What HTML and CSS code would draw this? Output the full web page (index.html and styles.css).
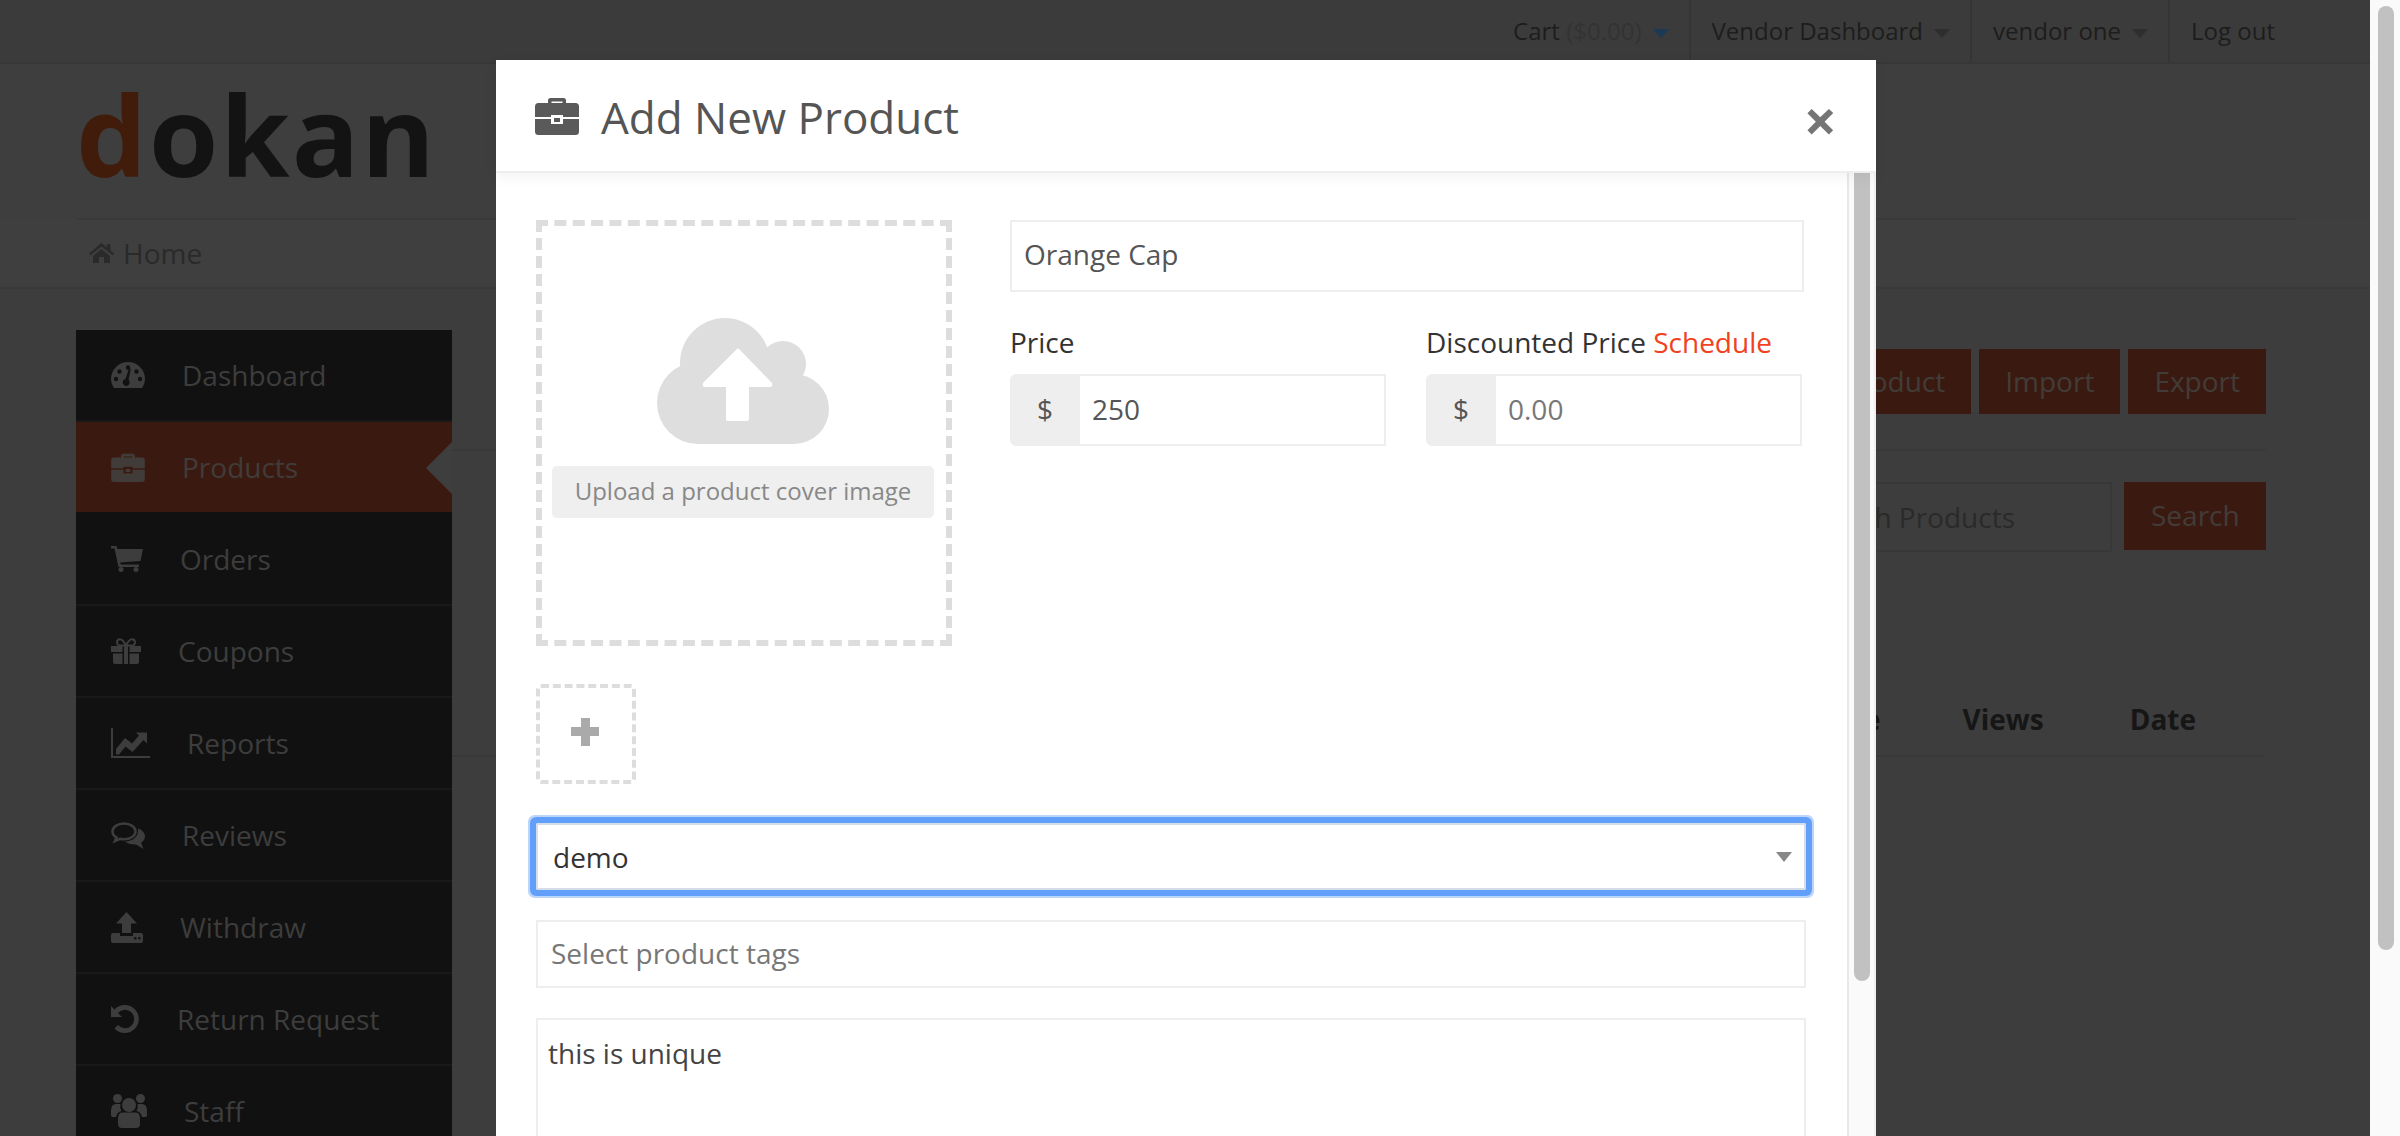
FILE: index.html
```html
<!DOCTYPE html>
<html lang="en">
<head>
  <meta charset="UTF-8" />
  <title>Add New Product</title>
  <link rel="stylesheet" href="styles.css">
</head>
<body>
  <svg class="defs" width="0" height="0">
    <symbol id="briefcase" viewBox="0 0 44 38">
      <path d="M13 7V3.500Q13 1 15.500 1H28.500Q31 1 31 3.500V7H27.500V4.500H16.500V7Z"/>
      <path d="M3.500 6H40.500Q44 6 44 9.500V20H28V18H16V20H0V9.500Q0 6 3.500 6Z"/>
      <path d="M0 22H16V27H28V22H44V34.500Q44 38 40.500 38H3.500Q0 38 0 34.500Z"/>
      <rect x="19" y="21" width="6" height="4"/>
    </symbol>
  </svg>

  <div class="page">
    <div class="site">
      <div class="topbar">
        <a class="top-item">Cart <span class="top-muted">($0.00)</span><i class="caret caret-blue"></i></a>
        <a class="top-item">Vendor Dashboard<i class="caret"></i></a>
        <a class="top-item">vendor one<i class="caret"></i></a>
        <a class="top-item">Log out</a>
      </div>

      <div class="brand"><span class="logo"><span class="logo-d">d</span>okan</span></div>

      <div class="nav">
        <div class="nav-inner">
          <svg class="home-icon" viewBox="0 0 25 20"><path d="M12.500 0L18 4.600V1.200H21.500V7.500L25 10.500L23.500 12.300L12.500 3.500L1.500 12.300L0 10.500Z"/><path d="M4 13L12.500 6L21 13V20H15V14H10V20H4Z"/></svg>
          Home
        </div>
      </div>

      <div class="main">
        <ul class="sidebar">
          <li class="side-row">
            <svg class="ic" width="34" height="26" viewBox="0 0 34 26"><path fill-rule="evenodd" d="M3 26C1 23 0 20 0 17A17 17 0 0 1 34 17C34 20 33 23 31 26ZM2.800 17a2.200 2.200 0 1 0 4.400 0a2.200 2.200 0 1 0 -4.400 0ZM6.300 9.500a2.200 2.200 0 1 0 4.400 0a2.200 2.200 0 1 0 -4.400 0ZM14.800 5.500a2.200 2.200 0 1 0 4.400 0a2.200 2.200 0 1 0 -4.400 0ZM23.300 9.500a2.200 2.200 0 1 0 4.400 0a2.200 2.200 0 1 0 -4.400 0ZM26.800 17a2.200 2.200 0 1 0 4.400 0a2.200 2.200 0 1 0 -4.400 0Z"/><path class="cut" d="M14.500 17L18 6.500L19.800 7L17.500 17.800A3.500 3.500 0 1 1 14.500 17Z"/></svg>
            <span>Dashboard</span>
          </li>
          <li class="side-row side-active">
            <svg class="ic" width="34" height="29"><use href="#briefcase"/></svg>
            <span>Products</span>
          </li>
          <li class="side-row">
            <svg class="ic" width="32" height="26" viewBox="0 0 32 26"><path d="M0 0H5.500L6.300 3H32L29.500 15L9.200 16.500L9.700 18.500H28V21H7.500L3.500 2.500H0Z"/><circle cx="10" cy="23.500" r="2.500"/><circle cx="25" cy="23.500" r="2.500"/></svg>
            <span>Orders</span>
          </li>
          <li class="side-row">
            <svg class="ic" width="30" height="26" viewBox="0 0 30 26"><path d="M0 8H11.500V14H0ZM13 8H17V26H13ZM18.500 8H30V14H18.500ZM2 15.500H11.500V26H4Q2 26 2 24ZM18.500 15.500H28V24Q28 26 26 26H18.500Z"/><path class="bow" d="M15 7.500H10Q6 7.500 6 4.500Q6 1.200 9 1.200Q12 1.200 15 7.500Q18 1.200 21 1.200Q24 1.200 24 4.500Q24 7.500 20 7.500Z"/></svg>
            <span>Coupons</span>
          </li>
          <li class="side-row">
            <svg class="ic" width="39" height="30" viewBox="0 0 39 30"><path class="bow" d="M1 0V29H39"/><path d="M5 21L14 10L21 15.500L28 7.500L25 4.500H36V15.500L32.500 12L21.500 24L14.500 18.500L8 26.500H5Z"/></svg>
            <span>Reports</span>
          </li>
          <li class="side-row">
            <svg class="ic" width="34" height="27" viewBox="0 0 34 27"><path class="bow bow-thick" d="M13 1.500C6.500 1.500 1.500 5 1.500 9.500C1.500 12 3 14 5.500 15.500L4 19L9 16.800C10.500 17.200 11.800 17.300 13 17.300C19.500 17.300 24.500 13.800 24.500 9.500C24.500 5 19.500 1.500 13 1.500Z"/><path d="M27 6.500C31 8 34 10.800 34 14.500C34 17 32.500 19.300 30 20.800L32.500 27L25 22.500C21 22.800 16.500 21.800 14 19.300C20.500 19.500 28 16 27 6.500Z"/></svg>
            <span>Reviews</span>
          </li>
          <li class="side-row">
            <svg class="ic" width="32" height="31" viewBox="0 0 32 31"><path d="M15.500 0L26 11.500H20V21H11V11.500H5Z"/><path fill-rule="evenodd" d="M2 21H9V24H22V21H30Q32 21 32 23V29Q32 31 30 31H2Q0 31 0 29V23Q0 21 2 21ZM23 26.200a1.300 1.300 0 1 0 2.600 0a1.300 1.300 0 1 0 -2.600 0ZM27 26.200a1.300 1.300 0 1 0 2.600 0a1.300 1.300 0 1 0 -2.600 0Z"/></svg>
            <span>Withdraw</span>
          </li>
          <li class="side-row">
            <svg class="ic" width="29" height="28" viewBox="0 0 29 28"><path d="M0 1L3.500 4.500A14 14 0 1 1 3.500 23.500L7 20A9.200 9.200 0 1 0 7 8L11 12H0Z"/></svg>
            <span>Return Request</span>
          </li>
          <li class="side-row">
            <svg class="ic" width="36" height="34" viewBox="0 0 36 34"><circle cx="6.500" cy="4.500" r="4.500"/><circle cx="29.500" cy="4.500" r="4.500"/><circle cx="18" cy="11" r="7"/><path d="M0 17Q0 10 5 10H9.500Q8.500 14 10.500 17Q6 18 5 23H1.500Q0 23 0 21ZM36 17Q36 10 31 10H26.500Q27.500 14 25.500 17Q30 18 31 23H34.500Q36 23 36 21ZM11 18.500H25Q29 18.500 29 25V30Q29 34 25 34H11Q7 34 7 30V25Q7 18.500 11 18.500Z"/></svg>
            <span>Staff</span>
          </li>
        </ul>

        <div class="content">
          <div class="actions">
            <a class="btn">Add New Product</a>
            <a class="btn">Import</a>
            <a class="btn">Export</a>
          </div>
          <div class="search-row">
            <div class="search-box">Search Products</div>
            <a class="btn btn-search">Search</a>
          </div>
          <div class="table-head">
            <span>Type</span>
            <span>Views</span>
            <span>Date</span>
          </div>
        </div>
      </div>

      <div class="modal">
        <div class="modal-head">
          <svg class="modal-icon" width="44" height="38"><use href="#briefcase"/></svg>
          <h1 class="modal-title">Add New Product</h1>
          <span class="modal-close">&times;</span>
        </div>
        <div class="modal-body">
          <div class="form">
            <div class="top-row">
              <div class="cover">
                <svg class="cloud" width="172" height="126" viewBox="0 0 172 126">
                  <circle cx="68" cy="45" r="45"/>
                  <circle cx="126" cy="46" r="23"/>
                  <circle cx="41" cy="85" r="41"/>
                  <circle cx="137" cy="91" r="35"/>
                  <rect x="41" y="50" width="96" height="76"/>
                  <path class="cloud-arrow" d="M80 31Q81 30 82 31L115 65Q116 69 113 69H92V101Q92 103 90 103H71Q69 103 69 101V69H48Q45 69 46 65Z"/>
                </svg>
                <div class="cover-label">Upload a product cover image</div>
              </div>
              <div class="fields">
                <div class="input title-input">Orange Cap</div>
                <div class="price-row">
                  <div class="price-col">
                    <div class="label">Price</div>
                    <div class="group">
                      <span class="addon">$</span>
                      <span class="group-value">250</span>
                    </div>
                  </div>
                  <div class="price-col">
                    <div class="label">Discounted Price <a class="link">Schedule</a></div>
                    <div class="group">
                      <span class="addon">$</span>
                      <span class="group-value placeholder">0.00</span>
                    </div>
                  </div>
                </div>
              </div>
            </div>

            <div class="add-image"><span class="plus"></span></div>

            <div class="select">demo<i class="select-caret"></i></div>
            <div class="input tags placeholder">Select product tags</div>
            <div class="textarea">this is unique</div>
          </div>
          <div class="modal-track"><div class="modal-thumb"></div></div>
        </div>
      </div>
    </div>

    <div class="page-track"><div class="page-thumb"></div></div>
  </div>
</body>
</html>
```

FILE: styles.css
```css
* {
  box-sizing: border-box;
}

html, body {
  height: 100%;
  margin: 0;
  overflow: hidden;
}

body {
  font-family: "Open Sans", "Noto Sans", sans-serif;
  font-size: 28px;
  color: #555;
}

.defs {
  position: absolute;
}

.page {
  display: flex;
  height: 1136px;
}

.site {
  position: relative;
  flex: 1;
  overflow: hidden;
  background: #3d3d3d;
}

/* top bar */
.topbar {
  display: flex;
  justify-content: flex-end;
  height: 64px;
  padding-right: 74px;
  background: #3b3b3b;
  border-bottom: 2px solid #373737;
  font-size: 24px;
  line-height: 61px;
  color: #1d1d1d;
}

.top-item {
  padding: 0 20px 0 21px;
  border-right: 2px solid #353535;
}

.top-item:last-child {
  padding-right: 21px;
  border-right: 0;
}

.top-muted {
  color: #333;
}

.caret {
  display: inline-block;
  margin-left: 11px;
  vertical-align: middle;
  border-top: 9px solid #2e2e2e;
  border-left: 8px solid transparent;
  border-right: 8px solid transparent;
}

.caret-blue {
  border-top-color: #1a3a55;
}

/* logo + nav */
.brand {
  height: 154px;
  padding: 0 0 0 76px;
  background: #3e3e3e;
}

.logo {
  display: block;
  font-size: 112px;
  font-weight: 700;
  letter-spacing: 2px;
  line-height: 140px;
  color: #131313;
}

.logo-d {
  color: #411c0b;
}

.nav {
  height: 71px;
  padding: 0 74px 0 76px;
  background: #3f3f3f;
  border-bottom: 2px solid #393939;
}

.nav-inner {
  display: flex;
  align-items: center;
  gap: 9px;
  height: 69px;
  padding: 0 0 2px 13px;
  border-top: 2px solid #3a3a3a;
  color: #2a2a2a;
}

.home-icon {
  width: 25px;
  height: 20px;
  fill: #2a2a2a;
}

/* behind the modal */
.main {
  display: flex;
  padding: 41px 104px 0 76px;
}

.sidebar {
  flex: none;
  width: 376px;
  height: 900px;
  margin: 0;
  padding: 0;
  list-style: none;
  background: #111;
  color: #3d3d3d;
}

.side-row {
  display: flex;
  align-items: center;
  gap: 37px;
  height: 92px;
  padding-left: 35px;
  border-bottom: 2px solid #191919;
}

.side-active {
  position: relative;
  background: #3a1a10;
  background-clip: padding-box;
  border-bottom-color: #111;
  color: #413c3a;
}

.side-active::after {
  content: "";
  position: absolute;
  right: 0;
  top: 20px;
  border-top: 26px solid transparent;
  border-bottom: 26px solid transparent;
  border-right: 26px solid #3e3e3e;
}

.ic {
  flex: none;
  fill: currentColor;
}

.cut {
  fill: #111;
}

.bow {
  fill: none;
  stroke: currentColor;
  stroke-width: 2;
}

.bow-thick {
  stroke-width: 2.600;
}

.content {
  flex: 1;
  padding-top: 19px;
}

.actions {
  display: flex;
  justify-content: flex-end;
  gap: 8px;
  height: 102px;
  border-bottom: 2px solid #393939;
  padding-bottom: 35px;
}

.btn {
  padding: 0 26px;
  background: #3a1a10;
  color: #423c39;
  line-height: 65px;
}

.search-row {
  display: flex;
  justify-content: flex-end;
  gap: 12px;
  margin-top: 31px;
}

.search-box {
  width: 400px;
  height: 70px;
  padding: 0 95px 0 20px;
  border: 2px solid #383838;
  line-height: 66px;
  text-align: right;
  color: #2a2a2a;
}

.btn-search {
  width: 142px;
  height: 68px;
  padding: 0 27px;
  line-height: 66px;
}

.table-head {
  display: flex;
  justify-content: flex-end;
  height: 98px;
  margin: 107px 3px 0 0;
  padding: 41px 67px 0 0;
  border-bottom: 2px solid #383838;
  font-weight: 700;
  color: #161616;
}

.table-head span + span {
  margin-left: 82px;
}

.table-head span:last-child {
  margin-left: 86px;
}

/* modal */
.modal {
  position: absolute;
  left: 496px;
  top: 60px;
  width: 1380px;
  height: 1076px;
  background: #fff;
  display: flex;
  flex-direction: column;
}

.modal-head {
  position: relative;
  z-index: 1;
  display: flex;
  align-items: center;
  flex: none;
  height: 113px;
  padding: 0 39px 0 39px;
  background: #fff;
  border-bottom: 2px solid #eee;
  box-shadow: 0 4px 14px rgba(0, 0, 0, 0.05);
}

.modal-icon {
  flex: none;
  margin-right: 22px;
  fill: #5a5a5a;
}

.modal-title {
  flex: 1;
  margin: 0;
  padding-top: 2px;
  font-size: 44px;
  font-weight: 400;
  color: #555;
}

.modal-close {
  padding-top: 8px;
  font-size: 58px;
  font-weight: 700;
  line-height: 1;
  color: #757575;
}

.modal-body {
  display: flex;
  flex: 1;
  min-height: 0;
}

.form {
  flex: 1;
  padding: 47px 41px 0 40px;
}

.top-row {
  display: flex;
  gap: 58px;
}

.cover {
  display: flex;
  flex-direction: column;
  align-items: center;
  flex: none;
  width: 416px;
  height: 426px;
  padding: 92px 2px 0 0;
  border: 6px dashed #ddd;
}

.cloud {
  flex: none;
  fill: #dedede;
}

.cloud-arrow {
  fill: #fff;
}

.cover-label {
  flex: none;
  width: 382px;
  height: 52px;
  margin-top: 22px;
  background: #efefef;
  border-radius: 5px;
  font-size: 24px;
  line-height: 50px;
  text-align: center;
  color: #888;
}

.fields {
  width: 794px;
}

.input {
  height: 72px;
  padding: 0 12px;
  border: 2px solid #eee;
  line-height: 65px;
}

.price-row {
  display: flex;
  gap: 40px;
  margin-top: 32px;
}

.price-col {
  width: 376px;
}

.label {
  height: 50px;
  line-height: 37px;
  color: #333;
}

.link {
  color: #f0421e;
}

.group {
  display: flex;
  height: 72px;
  border: 2px solid #eee;
  border-radius: 6px 0 0 6px;
}

.addon {
  flex: none;
  width: 68px;
  padding-right: 2px;
  background: #eee;
  line-height: 66px;
  text-align: center;
}

.group-value {
  padding-left: 12px;
  line-height: 66px;
}

.placeholder {
  color: #777;
}

.add-image {
  display: flex;
  align-items: center;
  justify-content: center;
  width: 100px;
  height: 100px;
  margin-top: 38px;
  border: 4px dashed #ddd;
  border-radius: 5px;
}

.plus {
  width: 28px;
  height: 28px;
  margin: -5px 0 0 -2px;
  background:
    linear-gradient(#aaa, #aaa) center / 9px 28px no-repeat,
    linear-gradient(#aaa, #aaa) center / 28px 9px no-repeat;
  border-radius: 3px;
}

.select {
  position: relative;
  height: 67px;
  margin-top: 39px;
  padding: 0 15px;
  border: 2px solid #d5dde8;
  border-radius: 2px;
  box-shadow: 0 0 0 6px #619ffb, 0 0 0 8px #bcd6fb;
  line-height: 65px;
  color: #333;
}

.select-caret {
  position: absolute;
  right: 12px;
  top: 27px;
  border-top: 10px solid #888;
  border-left: 8px solid transparent;
  border-right: 8px solid transparent;
}

.tags {
  height: 68px;
  margin-top: 30px;
  padding: 0 13px;
  line-height: 62px;
}

.textarea {
  height: 200px;
  margin-top: 30px;
  padding: 14px 10px;
  border: 2px solid #eee;
  color: #444;
}

.modal-track {
  position: relative;
  flex: none;
  width: 29px;
  background: #fafafa;
  border-left: 2px solid #e8e8e8;
  border-right: 2px solid #f0f0f0;
}

.modal-thumb {
  width: 16px;
  height: 808px;
  margin-left: 5px;
  background: #c1c1c1;
  border-radius: 0 0 8px 8px;
}

/* page scrollbar */
.page-track {
  flex: none;
  width: 30px;
  padding: 6px 6px 0 8px;
  background: #fafafa;
}

.page-thumb {
  height: 944px;
  background: #c1c1c1;
  border-radius: 8px;
}
```
